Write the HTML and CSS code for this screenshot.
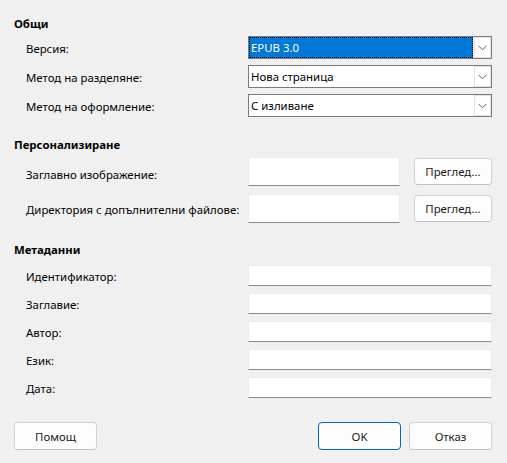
FILE: index.html
```html
<!DOCTYPE html>
<html lang="bg">
<head>
<meta charset="utf-8">
<link rel="stylesheet" href="styles.css">
</head>
<body>
<div class="dialog">
  <section class="sec sec-general">
    <h2 class="heading">Общи</h2>
    <div class="rows rows-combo">
      <div class="row">
        <span class="label">Версия:</span>
        <div class="combo focused">
          <span class="value"><span class="value-text">EPUB 3.0</span></span>
          <span class="drop"><svg width="9" height="6" viewBox="0 0 9 6"><path d="M0.5 0.8 L4.5 4.8 L8.5 0.8" fill="none" stroke="#5c5c5c" stroke-width="1"/></svg></span>
        </div>
      </div>
      <div class="row">
        <span class="label">Метод на разделяне:</span>
        <div class="combo">
          <span class="value"><span class="value-text">Нова страница</span></span>
          <span class="drop"><svg width="9" height="6" viewBox="0 0 9 6"><path d="M0.5 0.8 L4.5 4.8 L8.5 0.8" fill="none" stroke="#5c5c5c" stroke-width="1"/></svg></span>
        </div>
      </div>
      <div class="row">
        <span class="label">Метод на оформление:</span>
        <div class="combo">
          <span class="value"><span class="value-text">С изливане</span></span>
          <span class="drop"><svg width="9" height="6" viewBox="0 0 9 6"><path d="M0.5 0.8 L4.5 4.8 L8.5 0.8" fill="none" stroke="#5c5c5c" stroke-width="1"/></svg></span>
        </div>
      </div>
    </div>
  </section>

  <section class="sec sec-custom">
    <h2 class="heading">Персонализиране</h2>
    <div class="rows rows-browse">
      <div class="row">
        <span class="label label-low">Заглавно изображение:</span>
        <div class="browse">
          <span class="field field-tall"></span>
          <button class="btn btn-browse" type="button">Преглед...</button>
        </div>
      </div>
      <div class="row">
        <span class="label">Директория с допълнителни файлове:</span>
        <div class="browse">
          <span class="field field-tall"></span>
          <button class="btn btn-browse" type="button">Преглед...</button>
        </div>
      </div>
    </div>
  </section>

  <section class="sec sec-meta">
    <h2 class="heading">Метаданни</h2>
    <div class="rows rows-meta">
      <div class="row"><span class="label">Идентификатор:</span><span class="field field-meta"></span></div>
      <div class="row"><span class="label">Заглавие:</span><span class="field field-meta"></span></div>
      <div class="row"><span class="label">Автор:</span><span class="field field-meta"></span></div>
      <div class="row"><span class="label">Език:</span><span class="field field-meta"></span></div>
      <div class="row"><span class="label">Дата:</span><span class="field field-meta"></span></div>
    </div>
  </section>

  <footer class="footer">
    <button class="btn btn-foot" type="button">Помощ</button>
    <div class="foot-right">
      <button class="btn btn-foot btn-default" type="button">OK</button>
      <button class="btn btn-foot" type="button">Отказ</button>
    </div>
  </footer>
</div>
</body>
</html>
```

FILE: styles.css
```css
* { box-sizing: border-box; }
html, body {
  margin: 0;
  padding: 0;
  background: #f0f0f0;
}
body {
  font-family: "Noto Sans", "Open Sans", sans-serif;
  font-size: 11.4px;
  color: #000;
  width: 507px;
  height: 463px;
  overflow: hidden;
}
.dialog {
  display: flex;
  flex-direction: column;
  padding: 16px 15px 14px 14px;
}
.heading {
  margin: 0;
  font-size: 11.4px;
  font-weight: bold;
  line-height: 16px;
  height: 16px;
}
.rows {
  display: flex;
  flex-direction: column;
  padding-left: 12px;
}
.rows-combo { margin-top: 4px; gap: 6px; }
.sec-custom { margin-top: 20px; }
.rows-browse { margin-top: 4px; gap: 8px; }
.sec-meta { margin-top: 19px; }
.rows-meta { margin-top: 7px; gap: 7px; }

.row {
  display: grid;
  grid-template-columns: 222px 1fr;
  align-items: center;
}
.label {
  line-height: 16px;
  white-space: nowrap;
  position: relative;
  top: 1px;
}
.label-low { top: 3px; }

.combo {
  height: 23px;
  display: flex;
  border: 1px solid #7a7a7a;
  background: #fff;
}
.value {
  flex: 1;
  display: flex;
  align-items: center;
  padding: 1px;
}
.value-text {
  padding-left: 1px;
  line-height: 16px;
}
.combo.focused .value {
  background: #0078d7;
  color: #fff;
  outline: 1px dotted #000;
  outline-offset: -1px;
}
.drop {
  width: 17px;
  display: flex;
  align-items: center;
  justify-content: center;
  background: #fff;
  border: 1px solid #e3e3e3;
  margin: 0 0 0 1px;
}

.browse {
  display: flex;
  align-items: center;
  gap: 14px;
}
.field {
  display: block;
  background: #fff;
  border: 1px solid #ececec;
  border-bottom: 1px solid #8a8a8a;
}
.field-tall {
  width: 152px;
  height: 29px;
}
.field-meta {
  height: 21px;
}

.btn {
  font-family: inherit;
  font-size: 11.4px;
  color: #1a1a1a;
  background: #fdfdfd;
  border: 1px solid #d0d0d0;
  border-bottom-color: #c2c2c2;
  border-radius: 4px;
  padding: 0;
  margin: 0;
}
.btn-browse {
  width: 78px;
  height: 27px;
}
.footer {
  margin-top: 24px;
  display: flex;
  justify-content: space-between;
  align-items: center;
}
.foot-right {
  display: flex;
  gap: 8px;
}
.btn-foot {
  width: 83px;
  height: 28px;
}
.btn-default {
  border: 1px solid #0067c0;
}
```
